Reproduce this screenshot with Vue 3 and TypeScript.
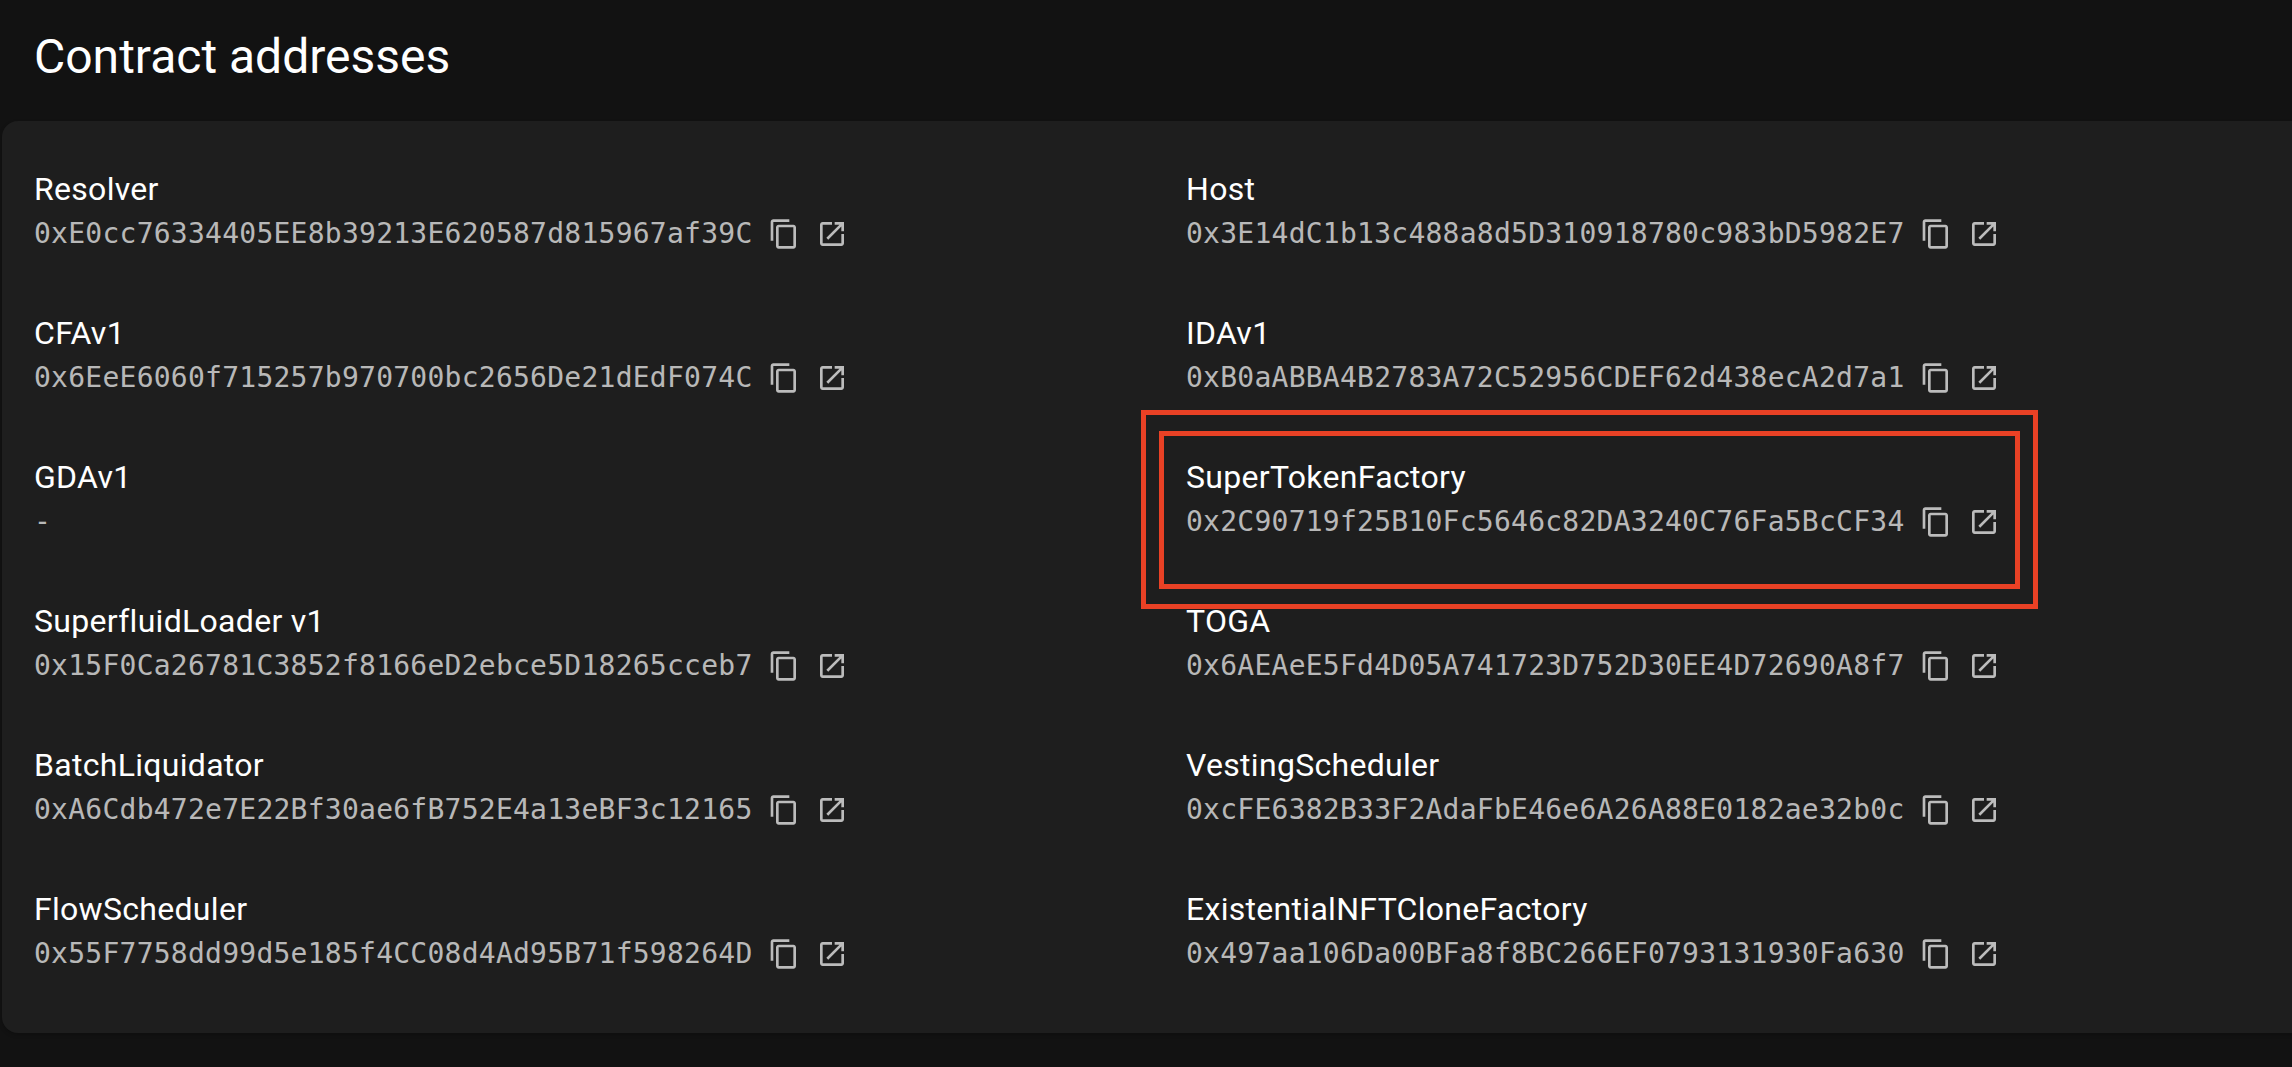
<script setup lang="ts">
// Contract addresses list, two columns of name + address + actions.
interface ContractRow {
  name: string;
  address: string;
  marked?: boolean;
}

const contracts: ContractRow[] = [
  { name: "Resolver", address: "0xE0cc76334405EE8b39213E620587d815967af39C" },
  { name: "Host", address: "0x3E14dC1b13c488a8d5D310918780c983bD5982E7" },
  { name: "CFAv1", address: "0x6EeE6060f715257b970700bc2656De21dEdF074C" },
  { name: "IDAv1", address: "0xB0aABBA4B2783A72C52956CDEF62d438ecA2d7a1" },
  { name: "GDAv1", address: "" },
  { name: "SuperTokenFactory", address: "0x2C90719f25B10Fc5646c82DA3240C76Fa5BcCF34", marked: true },
  { name: "SuperfluidLoader v1", address: "0x15F0Ca26781C3852f8166eD2ebce5D18265cceb7" },
  { name: "TOGA", address: "0x6AEAeE5Fd4D05A741723D752D30EE4D72690A8f7" },
  { name: "BatchLiquidator", address: "0xA6Cdb472e7E22Bf30ae6fB752E4a13eBF3c12165" },
  { name: "VestingScheduler", address: "0xcFE6382B33F2AdaFbE46e6A26A88E0182ae32b0c" },
  { name: "FlowScheduler", address: "0x55F7758dd99d5e185f4CC08d4Ad95B71f598264D" },
  { name: "ExistentialNFTCloneFactory", address: "0x497aa106Da00BFa8f8BC266EF0793131930Fa630" },
];
</script>

<template>
  <main class="page">
    <h1 class="title">Contract addresses</h1>
    <section class="card">
      <div v-for="c in contracts" :key="c.name" class="cell">
        <div class="name">{{ c.name }}</div>
        <div class="line">
          <span class="address">{{ c.address || "-" }}</span>
          <template v-if="c.address">
            <button class="action first" type="button" aria-label="Copy">
              <svg viewBox="0 0 24 24"><path d="M16 1H4c-1.1 0-2 .9-2 2v14h2V3h12V1zm3 4H8c-1.1 0-2 .9-2 2v14c0 1.1.9 2 2 2h11c1.1 0 2-.9 2-2V7c0-1.1-.9-2-2-2zm0 16H8V7h11v14z" /></svg>
            </button>
            <button class="action" type="button" aria-label="Open in explorer">
              <svg viewBox="0 0 24 24"><path d="M19 19H5V5h7V3H5c-1.11 0-2 .9-2 2v14c0 1.1.89 2 2 2h14c1.1 0 2-.9 2-2v-7h-2v7zM14 3v2h3.59l-9.83 9.83 1.41 1.41L19 6.41V10h2V3h-7z" /></svg>
            </button>
          </template>
        </div>
        <template v-if="c.marked">
          <div class="mark outer"></div>
          <div class="mark inner"></div>
        </template>
      </div>
    </section>
  </main>
</template>

<style scoped>
.page {
  width: 2292px;
  height: 1067px;
  overflow: hidden;
  background: #121212;
  font-family: Roboto, "Liberation Sans", sans-serif;
}
.title {
  margin: 0;
  padding: 29px 0 0 34px;
  height: 93px;
  box-sizing: border-box;
  font-size: 48px;
  font-weight: 400;
  line-height: 56px;
  color: #fff;
}
.card {
  box-sizing: border-box;
  width: 2336px;
  height: 912px;
  margin: 28px 0 0 2px;
  padding: 44px 32px 0;
  background: #1e1e1e;
  border-radius: 16px;
  box-shadow: 0 2px 4px rgba(0, 0, 0, 0.2);
  display: grid;
  grid-template-columns: 1152px 1152px;
  grid-auto-rows: 88px;
  row-gap: 56px;
}
.cell {
  position: relative;
}
.name {
  font-size: 32px;
  line-height: 48px;
  letter-spacing: 0.3px;
  color: #fff;
}
.line {
  display: flex;
  align-items: center;
  height: 40px;
  padding-top: 1px;
}
.address {
  font-family: "DejaVu Sans Mono", "Liberation Mono", monospace;
  font-size: 28px;
  line-height: 40px;
  letter-spacing: 0.25px;
  color: rgba(255, 255, 255, 0.7);
}
.action {
  flex: none;
  box-sizing: border-box;
  width: 48px;
  height: 64px;
  margin: -12px 0;
  padding: 16px 8px;
  border: 0;
  background: none;
}
.action.first {
  margin-left: 7px;
}
.action svg {
  display: block;
  width: 32px;
  height: 32px;
  fill: rgba(255, 255, 255, 0.7);
}
.mark {
  position: absolute;
  box-sizing: border-box;
  border: 5px solid #e94125;
  pointer-events: none;
}
.mark.outer {
  left: -45px;
  top: -43px;
  width: 897px;
  height: 199px;
}
.mark.inner {
  left: -27px;
  top: -22px;
  width: 861px;
  height: 158px;
}
</style>

<style>
html,
body {
  background: #121212;
}
</style>
